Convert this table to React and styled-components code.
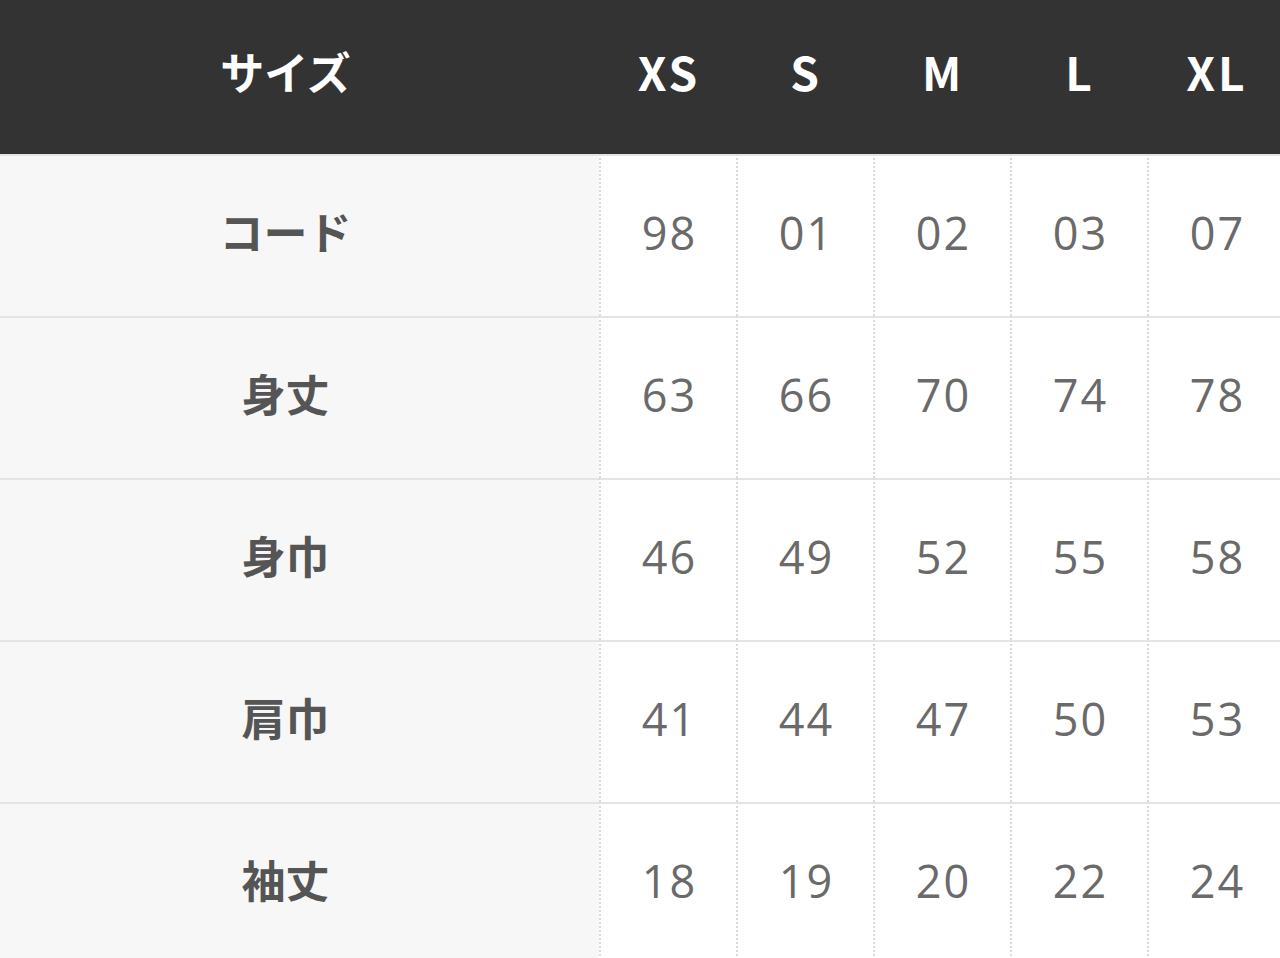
import React from 'react'
import styled, { createGlobalStyle } from 'styled-components'

const GlobalStyle = createGlobalStyle`
  html, body {
    margin: 0;
    padding: 0;
    background: #ffffff;
    overflow: hidden;
  }
  body {
    font-family: "Noto Sans CJK JP", "Noto Sans", sans-serif;
  }
`

const sizes = ['XS', 'S', 'M', 'L', 'XL']

const rows = [
  { label: 'コード', values: ['98', '01', '02', '03', '07'] },
  { label: '身丈', values: ['63', '66', '70', '74', '78'] },
  { label: '身巾', values: ['46', '49', '52', '55', '58'] },
  { label: '肩巾', values: ['41', '44', '47', '50', '53'] },
  { label: '袖丈', values: ['18', '19', '20', '22', '24'] },
]

const Wrap = styled.div`
  width: 1280px;
  height: 958px;
  overflow: hidden;
`

const Table = styled.div`
  width: 1284px;
  display: grid;
  grid-template-columns: 599px repeat(5, 137px);
`

const HeadCell = styled.div`
  height: 154px;
  background: #333333;
  color: #ffffff;
  font-weight: 700;
  font-size: ${(p) => (p.$label ? '44px' : '46px')};
  letter-spacing: ${(p) => (p.$label ? '0' : '3px')};
  text-indent: ${(p) => (p.$label ? '0' : '3px')};
  display: flex;
  align-items: center;
  justify-content: center;
  padding-right: ${(p) => (p.$label ? '28px' : '0')};
  padding-bottom: 12px;
  box-sizing: border-box;
`

const LabelCell = styled.div`
  height: 162px;
  background: #f7f7f7;
  color: #555555;
  font-weight: 700;
  font-size: 44px;
  display: flex;
  align-items: center;
  justify-content: center;
  padding-right: 28px;
  box-sizing: border-box;
  border-top: 2px solid #e4e4e4;
  padding-bottom: 10px;
`

const ValueCell = styled.div`
  height: 162px;
  background: #ffffff;
  color: #6a6a6a;
  font-family: "Open Sans", "Noto Sans", sans-serif;
  font-weight: 400;
  font-size: 45px;
  display: flex;
  align-items: center;
  justify-content: center;
  box-sizing: border-box;
  border-top: 2px solid #e4e4e4;
  border-left: 2px dotted #dadada;
  padding-bottom: 8px;
  letter-spacing: 2px;
  text-indent: 2px;
`

const App = () => {
  return (
    <Wrap>
      <GlobalStyle />
      <Table>
        <HeadCell $label>サイズ</HeadCell>
        {sizes.map((s) => (
          <HeadCell key={s}>{s}</HeadCell>
        ))}
        {rows.map((r) => (
          <React.Fragment key={r.label}>
            <LabelCell>{r.label}</LabelCell>
            {r.values.map((v, i) => (
              <ValueCell key={i}>{v}</ValueCell>
            ))}
          </React.Fragment>
        ))}
      </Table>
    </Wrap>
  )
}

export default App
